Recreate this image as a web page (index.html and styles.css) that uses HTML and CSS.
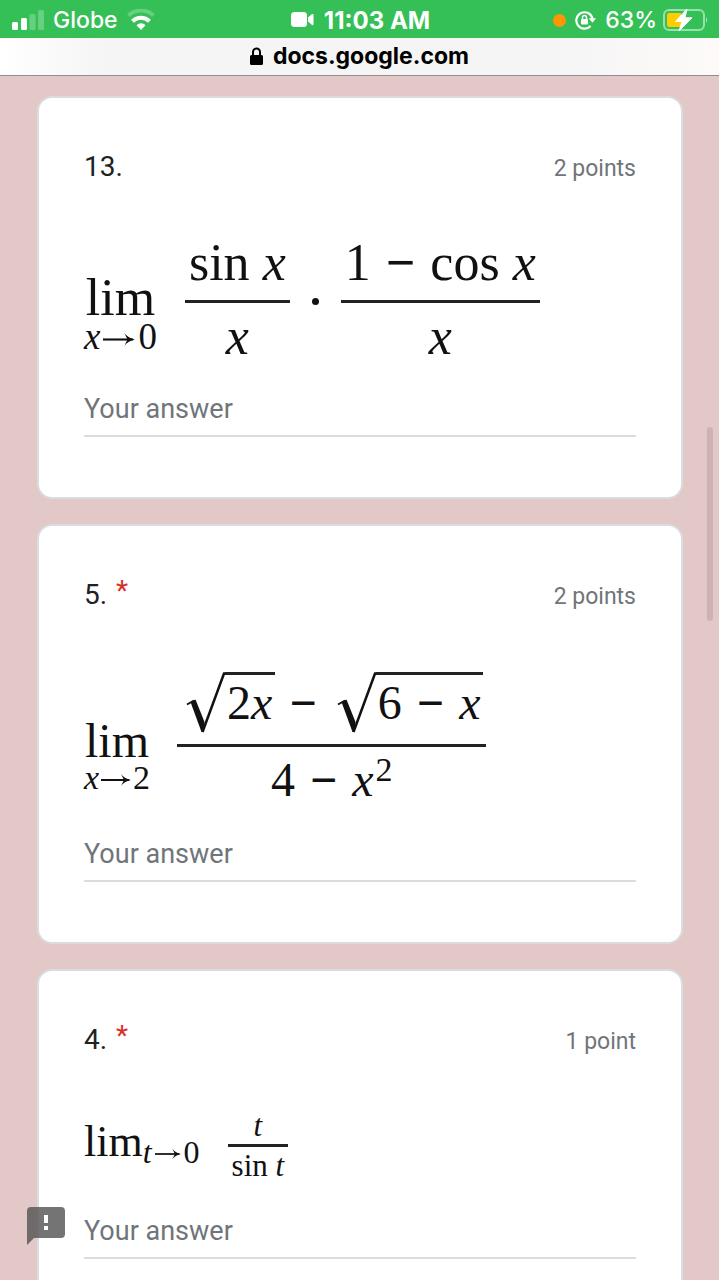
FILE: index.html
```html
<!DOCTYPE html>
<html lang="en">
<head>
    <meta charset="UTF-8">
    <meta name="viewport" content="width=device-width, initial-scale=1.0">
    <title>Limits Quiz</title>
    <link rel="stylesheet" href="styles.css">
</head>
<body>
    <header class="status-bar">
        <div class="status-left">
            <svg class="signal" width="32" height="20" viewBox="0 0 32 20" fill="#fff">
                <rect x="0" y="12" width="6" height="8" rx="1.5"/>
                <rect x="9" y="8" width="6" height="12" rx="1.5"/>
                <rect x="17.500" y="4" width="6" height="16" rx="1.5" opacity=".25"/>
                <rect x="26" y="0" width="6" height="20" rx="1.5" opacity=".25"/>
            </svg>
            <span>Globe</span>
            <svg class="wifi" width="28" height="22" viewBox="0 0 28 22" fill="none" stroke="#fff">
                <path d="M1.500 6.500C8.500-.2 19.500-.2 26.500 6.500" stroke-width="4" opacity=".25"/>
                <path d="M5.500 12.200C10.300 7.500 17.700 7.500 22.500 12.200" stroke-width="4"/>
                <path d="M9.500 16.300C12 13.500 16 13.500 18.500 16.300L14 21Z" fill="#fff" stroke="none"/>
            </svg>
        </div>
        <div class="status-time">
            <svg width="23" height="16" viewBox="0 0 23 16" fill="#fff">
                <rect x="0" y="0" width="16" height="15" rx="3.500"/>
                <path d="M17 5.500L21 2Q22.500 1.500 22.500 3V12Q22.500 13.500 21 13L17 9.500Z"/>
            </svg>
            <span>11:03 AM</span>
        </div>
        <div class="status-right">
            <span class="mic-dot"></span>
            <svg class="lock-rotate" width="21" height="20" viewBox="0 0 21 20">
                <path d="M15.600 16A8.200 8.200 0 1 1 17.500 8.500" fill="none" stroke="#fff" stroke-width="2.200"/>
                <path d="M13.800 8.200H21L17.400 12.800Z" fill="#fff"/>
                <rect x="6" y="9" width="7" height="5.500" rx="1" fill="#fff"/>
                <path d="M7.500 9.500V7.500A2 2 0 0 1 11.500 7.500V9.500" fill="none" stroke="#fff" stroke-width="1.400"/>
            </svg>
            <span>63%</span>
            <svg width="46" height="24" viewBox="0 0 46 24">
                <rect x="1" y="2" width="40" height="20" rx="5" fill="none" stroke="#fff" stroke-width="2" opacity=".5"/>
                <path d="M43 9Q45.500 12 43 15Z" fill="#fff" opacity=".5"/>
                <path d="M6 5H18V19H6Q4 19 4 17V7Q4 5 6 5Z" fill="#ffcc00"/>
                <path d="M24 1L12.500 13.500H19L16 23L29 9.800H22Z" fill="#fff" stroke="#fff" stroke-width="1"/>
            </svg>
        </div>
    </header>

    <div class="url-bar">
        <svg width="13" height="18" viewBox="0 0 13 18">
            <rect x="0" y="8" width="13" height="10" rx="1.500"/>
            <path d="M3 9V5A3.500 3.500 0 0 1 10 5V9" fill="none" stroke="#000" stroke-width="2"/>
        </svg>
        <span>docs.google.com</span>
    </div>

    <main>
        <section class="card">
            <div class="card-header">
                <label for="q13">13.</label>
                <span class="points">2 points</span>
            </div>
            <div class="formula product">
                <div class="limit">
                    <span class="lim">lim</span>
                    <span class="under"><i>x</i><svg class="arrow" viewBox="0 0 30 12"><path d="M0 6H28" fill="none" stroke="#111" stroke-width="2"/><path d="M20 0Q23 4.500 30 6Q23 7.500 20 12L23 6Z" fill="#111"/></svg>0</span>
                </div>
                <div class="fraction first">
                    <div class="num">sin <i>x</i></div>
                    <div class="den"><i>x</i></div>
                </div>
                <span class="times"></span>
                <div class="fraction">
                    <div class="num">1<span class="op">−</span>cos <i>x</i></div>
                    <div class="den"><i>x</i></div>
                </div>
            </div>
            <input type="text" id="q13" placeholder="Your answer">
        </section>

        <section class="card">
            <div class="card-header">
                <label for="q5">5. <span class="required">*</span></label>
                <span class="points">2 points</span>
            </div>
            <div class="formula radicals">
                <div class="limit">
                    <span class="lim">lim</span>
                    <span class="under"><i>x</i><svg class="arrow" viewBox="0 0 30 12"><path d="M0 6H28" fill="none" stroke="#111" stroke-width="2"/><path d="M20 0Q23 4.500 30 6Q23 7.500 20 12L23 6Z" fill="#111"/></svg>2</span>
                </div>
                <div class="fraction">
                    <div class="num">
                        <svg class="root" width="39" height="62" viewBox="0 0 39 62" fill="none" stroke="#111">
                            <path d="M1 32.500L8 28.500" stroke-width="2"/>
                            <path d="M4.500 30L9.500 27.500L18.500 50L17.500 60H15.500Z" fill="#111" stroke="none"/>
                            <path d="M16.500 60L38 1.500H39" stroke-width="2.500"/>
                        </svg>
                        <span class="radicand">2<i>x</i></span>
                        <span class="op">−</span>
                        <svg class="root" width="39" height="62" viewBox="0 0 39 62" fill="none" stroke="#111">
                            <path d="M1 32.500L8 28.500" stroke-width="2"/>
                            <path d="M4.500 30L9.500 27.500L18.500 50L17.500 60H15.500Z" fill="#111" stroke="none"/>
                            <path d="M16.500 60L38 1.500H39" stroke-width="2.500"/>
                        </svg>
                        <span class="radicand">6<span class="op">−</span><i>x</i></span>
                    </div>
                    <div class="den">4<span class="op">−</span><i>x</i><sup>2</sup></div>
                </div>
            </div>
            <input type="text" id="q5" placeholder="Your answer">
        </section>

        <section class="card">
            <div class="card-header">
                <label for="q4">4. <span class="required">*</span></label>
                <span class="points">1 point</span>
            </div>
            <div class="formula inline">
                <div class="limit">lim<sub><i>t</i><svg class="arrow" viewBox="0 0 30 12"><path d="M0 6H28" fill="none" stroke="#111" stroke-width="2"/><path d="M20 0Q23 4.500 30 6Q23 7.500 20 12L23 6Z" fill="#111"/></svg>0</sub></div>
                <div class="fraction">
                    <div class="num"><i>t</i></div>
                    <div class="den">sin <i>t</i></div>
                </div>
            </div>
            <input type="text" id="q4" placeholder="Your answer">
        </section>
    </main>

    <div class="scroll-thumb"></div>
    <button class="report" aria-label="Report a problem">
        <svg width="38" height="38" viewBox="0 0 38 38">
            <path d="M4 0H34Q38 0 38 4V27Q38 31 34 31H7L0 38V4Q0 0 4 0Z" fill="#555" opacity=".82"/>
            <path d="M17 8H21V16H17ZM17 19H21V23H17Z" fill="#fff"/>
        </svg>
    </button>
</body>
</html>
```

FILE: styles.css
```css
* {
    box-sizing: border-box;
}
body {
    margin: 0;
    height: 100vh;
    display: flex;
    flex-direction: column;
    overflow: hidden;
    background-color: #e3c8c8;
    font-family: Roboto, sans-serif;
    color: #202124;
}
svg {
    display: block;
    flex-shrink: 0;
}

/* Phone bars */
.status-bar {
    flex-shrink: 0;
    display: grid;
    grid-template-columns: 1fr auto 1fr;
    align-items: center;
    height: 38px;
    padding: 2px 10px 0 12px;
    background-color: #34c056;
    color: #fff;
    font-family: Inter, sans-serif;
    font-size: 23px;
    font-weight: 500;
}
.status-left, .status-time, .status-right {
    display: flex;
    align-items: center;
    gap: 9px;
}
.status-time {
    gap: 10px;
    font-size: 24px;
    font-weight: 700;
}
.status-right {
    justify-content: flex-end;
}
.status-right svg:last-child {
    margin-left: -3px;
}
.mic-dot {
    width: 13px;
    height: 13px;
    border-radius: 50%;
    background-color: #ff9500;
}
.url-bar {
    flex-shrink: 0;
    display: flex;
    align-items: center;
    justify-content: center;
    gap: 10px;
    height: 38px;
    padding-bottom: 1px;
    border-bottom: 1px solid #9b8a8d;
    background: linear-gradient(to right, #fff, #f5f5f5 15%, #f5f5f5 75%, #fdfaf9);
    color: #000;
    font-family: Inter, sans-serif;
    font-size: 23px;
    font-weight: 700;
}

/* Questions */
main {
    flex: 1;
    min-height: 0;
    overflow-y: auto;
    scrollbar-width: none;
    padding: 20px 36px 20px 37px;
}
.card {
    margin-bottom: 25px;
    padding: 53px 45px 60px;
    border: 2px solid #dadce0;
    border-radius: 15px;
    background-color: #fff;
}
.card-header {
    display: flex;
    justify-content: space-between;
    align-items: baseline;
    height: 32px;
    line-height: 32px;
    font-size: 28px;
}
.required {
    margin-left: 2px;
    line-height: 0;
    vertical-align: 4px;
    color: #d93025;
}
.points {
    font-size: 23px;
    color: #70757a;
}
.card input {
    display: block;
    width: 100%;
    height: 44px;
    margin-top: 34px;
    padding: 0 0 10px;
    border: none;
    border-bottom: 2px solid #dadce0;
    border-radius: 0;
    background: none;
    font-family: Roboto, sans-serif;
    font-size: 27px;
    color: #202124;
    outline: none;
}
.card input::placeholder {
    color: #70757a;
    opacity: 1;
}

/* Formulas */
.formula {
    display: flex;
    align-items: flex-start;
    margin-top: 55px;
    font-family: "Liberation Serif", serif;
    color: #111;
    white-space: nowrap;
}
.limit {
    display: flex;
    flex-direction: column;
    align-items: center;
}
.lim {
    line-height: 46px;
}
.arrow {
    display: inline-block;
    width: 30px;
    height: 12px;
    margin: 0 3px;
    vertical-align: 3px;
}
.num, .den {
    display: flex;
    justify-content: center;
    white-space: pre;
}
.num {
    border-bottom: 3px solid #222;
}
.op {
    font-weight: 700;
}
.product {
    font-size: 52px;
    line-height: 50px;
}
.product .limit {
    margin-top: 37px;
}
.product .under {
    font-size: 37px;
    line-height: 32px;
}
.product .under .arrow {
    width: 32px;
    height: 13px;
}
.product .num {
    padding: 0 4px 12px;
}
.product .den {
    padding-top: 12px;
    line-height: 44px;
}
.product .first {
    margin-left: 28px;
}
.product .op {
    margin: 0 15px;
}
.times {
    width: 7px;
    height: 7px;
    margin: 60px 22px 0;
    border-radius: 50%;
    background-color: #111;
}
.radicals {
    margin-top: 61px;
    font-size: 48px;
    line-height: 48px;
}
.radicals .limit {
    margin-top: 46px;
}
.radicals .under {
    font-size: 34px;
    line-height: 28px;
}
.radicals .under .arrow {
    width: 30px;
    margin: 0 2px;
}
.radicals .fraction {
    margin-left: 27px;
}
.radicals .num {
    padding: 0 3px 10px 9px;
    white-space: nowrap;
}
.radicals .den {
    padding-top: 9px;
}
.radicals .op {
    margin: 0 15px;
}
.radicals .num > .op {
    margin: 7px 20px 0 14px;
}
.radicand {
    display: flex;
    height: 55px;
    padding: 4px 3px 0 2px;
    border-top: 3px solid #222;
}
.radicals sup {
    margin-left: 2px;
    font-size: 34px;
    line-height: 28px;
}
.inline {
    font-size: 44px;
    line-height: 44px;
}
.inline .limit {
    display: block;
    margin-top: 9px;
}
.inline sub {
    font-size: 32px;
    line-height: 0;
    vertical-align: -7px;
}
.inline .arrow {
    width: 26px;
}
.inline .fraction {
    margin-left: 28px;
    font-size: 31px;
    line-height: 30px;
}
.inline .num {
    padding-bottom: 3px;
}
.inline .den {
    padding: 4px 4px 0;
}

/* Overlays */
.scroll-thumb {
    position: fixed;
    top: 427px;
    right: 6px;
    width: 6px;
    height: 194px;
    border-radius: 3px;
    background-color: #cdb2b4;
}
.report {
    position: fixed;
    left: 27px;
    bottom: 35px;
    padding: 0;
    border: none;
    background: none;
    cursor: pointer;
}
```
